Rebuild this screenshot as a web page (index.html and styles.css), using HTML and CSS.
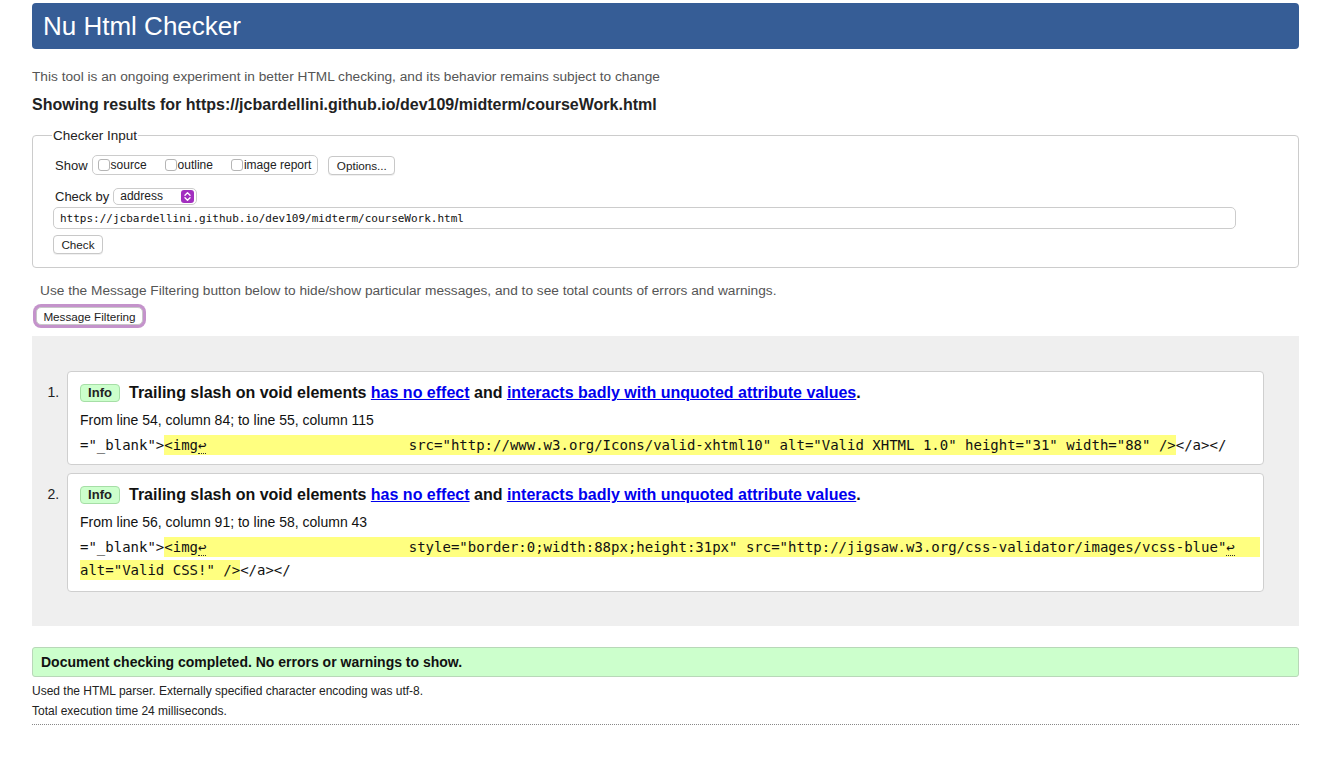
FILE: index.html
```html
<!DOCTYPE html>
<html lang="en">
<head>
<meta charset="utf-8">
<title>Nu Html Checker</title>
<link rel="stylesheet" href="styles.css">
</head>
<body>
<header class="bar"><h1>Nu Html Checker</h1></header>
<p class="intro">This tool is an ongoing experiment in better HTML checking, and its behavior remains subject to change</p>
<h2 class="results-for">Showing results for https://jcbardellini.github.io/dev109/midterm/courseWork.html</h2>

<fieldset class="input">
  <legend>Checker Input</legend>
  <div class="row show-row">
    <span class="lbl">Show</span>
    <span class="group">
      <span class="opt"><span class="cb"></span>source</span>
      <span class="opt"><span class="cb"></span>outline</span>
      <span class="opt"><span class="cb"></span>image report</span>
    </span>
    <span class="btn options">Options...</span>
  </div>
  <div class="row by-row">
    <span class="lbl">Check by</span>
    <span class="select">address
      <span class="arrows"><svg width="13" height="13" viewBox="0 0 13 13"><path d="M4 5.2 L6.5 2.8 L9 5.2 M4 7.8 L6.5 10.2 L9 7.8" fill="none" stroke="#fff" stroke-width="1.4" stroke-linecap="round" stroke-linejoin="round"/></svg></span>
    </span>
  </div>
  <div class="url">https://jcbardellini.github.io/dev109/midterm/courseWork.html</div>
  <div class="row check-row"><span class="btn check">Check</span></div>
</fieldset>

<p class="filter-note">Use the Message Filtering button below to hide/show particular messages, and to see total counts of errors and warnings.</p>
<div class="filter-wrap"><span class="btn filter">Message Filtering</span></div>

<div class="results">
  <ol class="messages">
    <li class="msg">
      <p class="title"><span class="badge">Info</span><span class="text">Trailing slash on void elements <a href="#">has no effect</a> and <a href="#">interacts badly with unquoted attribute values</a>.</span></p>
      <p class="loc">From line 54, column 84; to line 55, column 115</p>
      <pre class="extract">="_blank"&gt;<mark>&lt;img<span class="lf">↩</span>                        src="http://www.w3.org/Icons/valid-xhtml10" alt="Valid XHTML 1.0" height="31" width="88" /&gt;</mark>&lt;/a&gt;&lt;/</pre>
    </li>
    <li class="msg">
      <p class="title"><span class="badge">Info</span><span class="text">Trailing slash on void elements <a href="#">has no effect</a> and <a href="#">interacts badly with unquoted attribute values</a>.</span></p>
      <p class="loc">From line 56, column 91; to line 58, column 43</p>
      <pre class="extract">="_blank"&gt;<mark>&lt;img<span class="lf">↩</span>                        style="border:0;width:88px;height:31px" src="http://jigsaw.w3.org/css-validator/images/vcss-blue"<span class="lf">↩</span>   </mark>
<mark>alt="Valid CSS!" /&gt;</mark>&lt;/a&gt;&lt;/</pre>
    </li>
  </ol>
</div>

<p class="success">Document checking completed. No errors or warnings to show.</p>
<p class="details">Used the HTML parser. Externally specified character encoding was utf-8.</p>
<p class="details">Total execution time 24 milliseconds.</p>
<hr class="dotted">
</body>
</html>
```

FILE: styles.css
```css
html { background: #fff; }
body {
  margin: 0;
  padding: 3px 20px 40px 32px;
  font-family: "Liberation Sans", Arial, sans-serif;
  color: #111;
}
.bar {
  background: #365d96;
  border-radius: 4px;
  height: 46px;
  display: flex;
  align-items: center;
  padding-left: 11px;
}
.bar h1 {
  margin: 0;
  font-size: 26px;
  font-weight: normal;
  color: #fff;
}
.intro {
  margin: 20px 0 0;
  font-size: 13.7px;
  line-height: 16px;
  color: #555;
}
.results-for {
  margin: 11px 0 0;
  font-size: 16px;
  line-height: 18px;
  color: #222;
}
.input {
  margin: 14px 0 0;
  border: 1px solid #ccc;
  border-radius: 4px;
  padding: 5px 20px 13px 20px;
  min-width: 0;
}
.input legend {
  font-size: 13.5px;
  padding: 0 1px;
  margin-left: -1px;
  color: #222;
}
.row {
  display: flex;
  align-items: center;
  font-size: 13px;
  color: #222;
}
.show-row { margin-top: 7px; height: 20px; }
.lbl { margin-left: 2px; margin-right: 4px; }
.group {
  box-sizing: border-box;
  display: flex;
  align-items: center;
  height: 20px;
  border: 1px solid #ccc;
  border-radius: 5px;
  padding: 0 6px 0 5px;
  gap: 18px;
  font-size: 12px;
}
.opt { display: flex; align-items: center; }
.cb {
  box-sizing: border-box;
  width: 12px;
  height: 12px;
  border: 1px solid #b5b5b5;
  border-radius: 3px;
  background: #fff;
  margin-right: 1px;
}
.btn {
  box-sizing: border-box;
  display: inline-flex;
  align-items: center;
  justify-content: center;
  height: 18px;
  padding: 0 8px;
  border: 1px solid #c8c8c8;
  border-radius: 4px;
  background: #fff;
  font-size: 11.7px;
  color: #222;
  box-shadow: 0 1px 0 rgba(0,0,0,0.06);
}
.btn.options { margin-left: 10px; height: 19px; width: 67px; padding: 0; }
.by-row { margin-top: 12px; height: 18px; }
.by-row .lbl { margin-right: 4px; }
.select {
  box-sizing: border-box;
  position: relative;
  display: inline-flex;
  align-items: center;
  width: 84px;
  height: 17px;
  border: 1px solid #ccc;
  border-radius: 5px;
  padding-left: 6px;
  font-size: 12px;
  background: #fff;
}
.arrows {
  position: absolute;
  right: 2px;
  top: 1px;
  width: 13px;
  height: 13px;
  border-radius: 3px;
  background: #a22fbf;
  display: flex;
}
.url {
  margin-top: 2px;
  height: 20px;
  width: 1175px;
  border: 1px solid #ccc;
  border-radius: 5px;
  display: flex;
  align-items: center;
  padding-left: 6px;
  font-family: "DejaVu Sans Mono", "Liberation Mono", monospace;
  font-size: 11px;
  color: #111;
}
.check-row { margin-top: 6px; }
.btn.check { width: 50px; height: 19px; padding: 0; }
.filter-note {
  margin: 15px 0 0 8px;
  font-size: 13.7px;
  line-height: 16px;
  color: #555;
}
.filter-wrap { margin-top: 5px; margin-left: 1px; display: flex; }
.btn.filter {
  height: 18px;
  width: 107px;
  padding: 0;
  border-color: #c8c8c8;
  box-shadow: 0 0 0 3px #c493cb;
  margin: 3px;
  border-radius: 5px;
}
.results {
  margin-top: 8px;
  background: #efefef;
  padding: 35px 35px 34px 35px;
}
.messages {
  margin: 0;
  padding: 0;
  list-style: decimal;
  font-size: 14px;
  color: #222;
}
.msg {
  background: #fff;
  border: 1px solid #cfcfcf;
  border-radius: 4px;
  padding: 11px 12px 7px 12px;
}
.msg:last-child { padding-bottom: 9px; }
.msg + .msg { margin-top: 8px; }
.msg::marker {
  font-size: 14px;
  content: counter(list-item) ".\a0\a0";
}
.title {
  margin: 0;
  font-size: 16px;
  font-weight: bold;
  line-height: 19px;
  color: #111;
  display: flex;
  align-items: center;
}
.title a { color: #0000ee; text-decoration: underline; }
.badge {
  box-sizing: border-box;
  display: inline-flex;
  align-items: center;
  justify-content: center;
  width: 40px;
  height: 18px;
  border: 1px solid #a6dea6;
  border-radius: 4px;
  background: #ccffcc;
  font-size: 13px;
  font-weight: bold;
  color: #222;
  margin-right: 9px;
  flex: none;
}
.loc {
  margin: 10px 0 0;
  font-size: 14px;
  line-height: 17px;
  color: #111;
}
.extract {
  margin: 5px 0 0;
  font-family: "DejaVu Sans Mono", "Liberation Mono", monospace;
  font-size: 14px;
  line-height: 23px;
  color: #111;
  white-space: pre;
}
.extract mark {
  background: #ffff80;
  color: #111;
  padding: 2px 0;
}
.lf {
  border-bottom: 1px dotted #333;
}
.success {
  margin: 21px 0 0;
  height: 28px;
  display: flex;
  align-items: center;
  padding-left: 8px;
  background: #ccffcc;
  border: 1px solid #b8d8b8;
  border-radius: 3px;
  font-size: 14px;
  font-weight: bold;
  color: #111;
}
.details {
  margin: 0;
  font-size: 12px;
  line-height: 20px;
  color: #222;
}
.success + .details { margin-top: 4px; }
.dotted {
  margin: 3px 0 0;
  border: 0;
  border-top: 1px dotted #888;
  height: 0;
}
```
